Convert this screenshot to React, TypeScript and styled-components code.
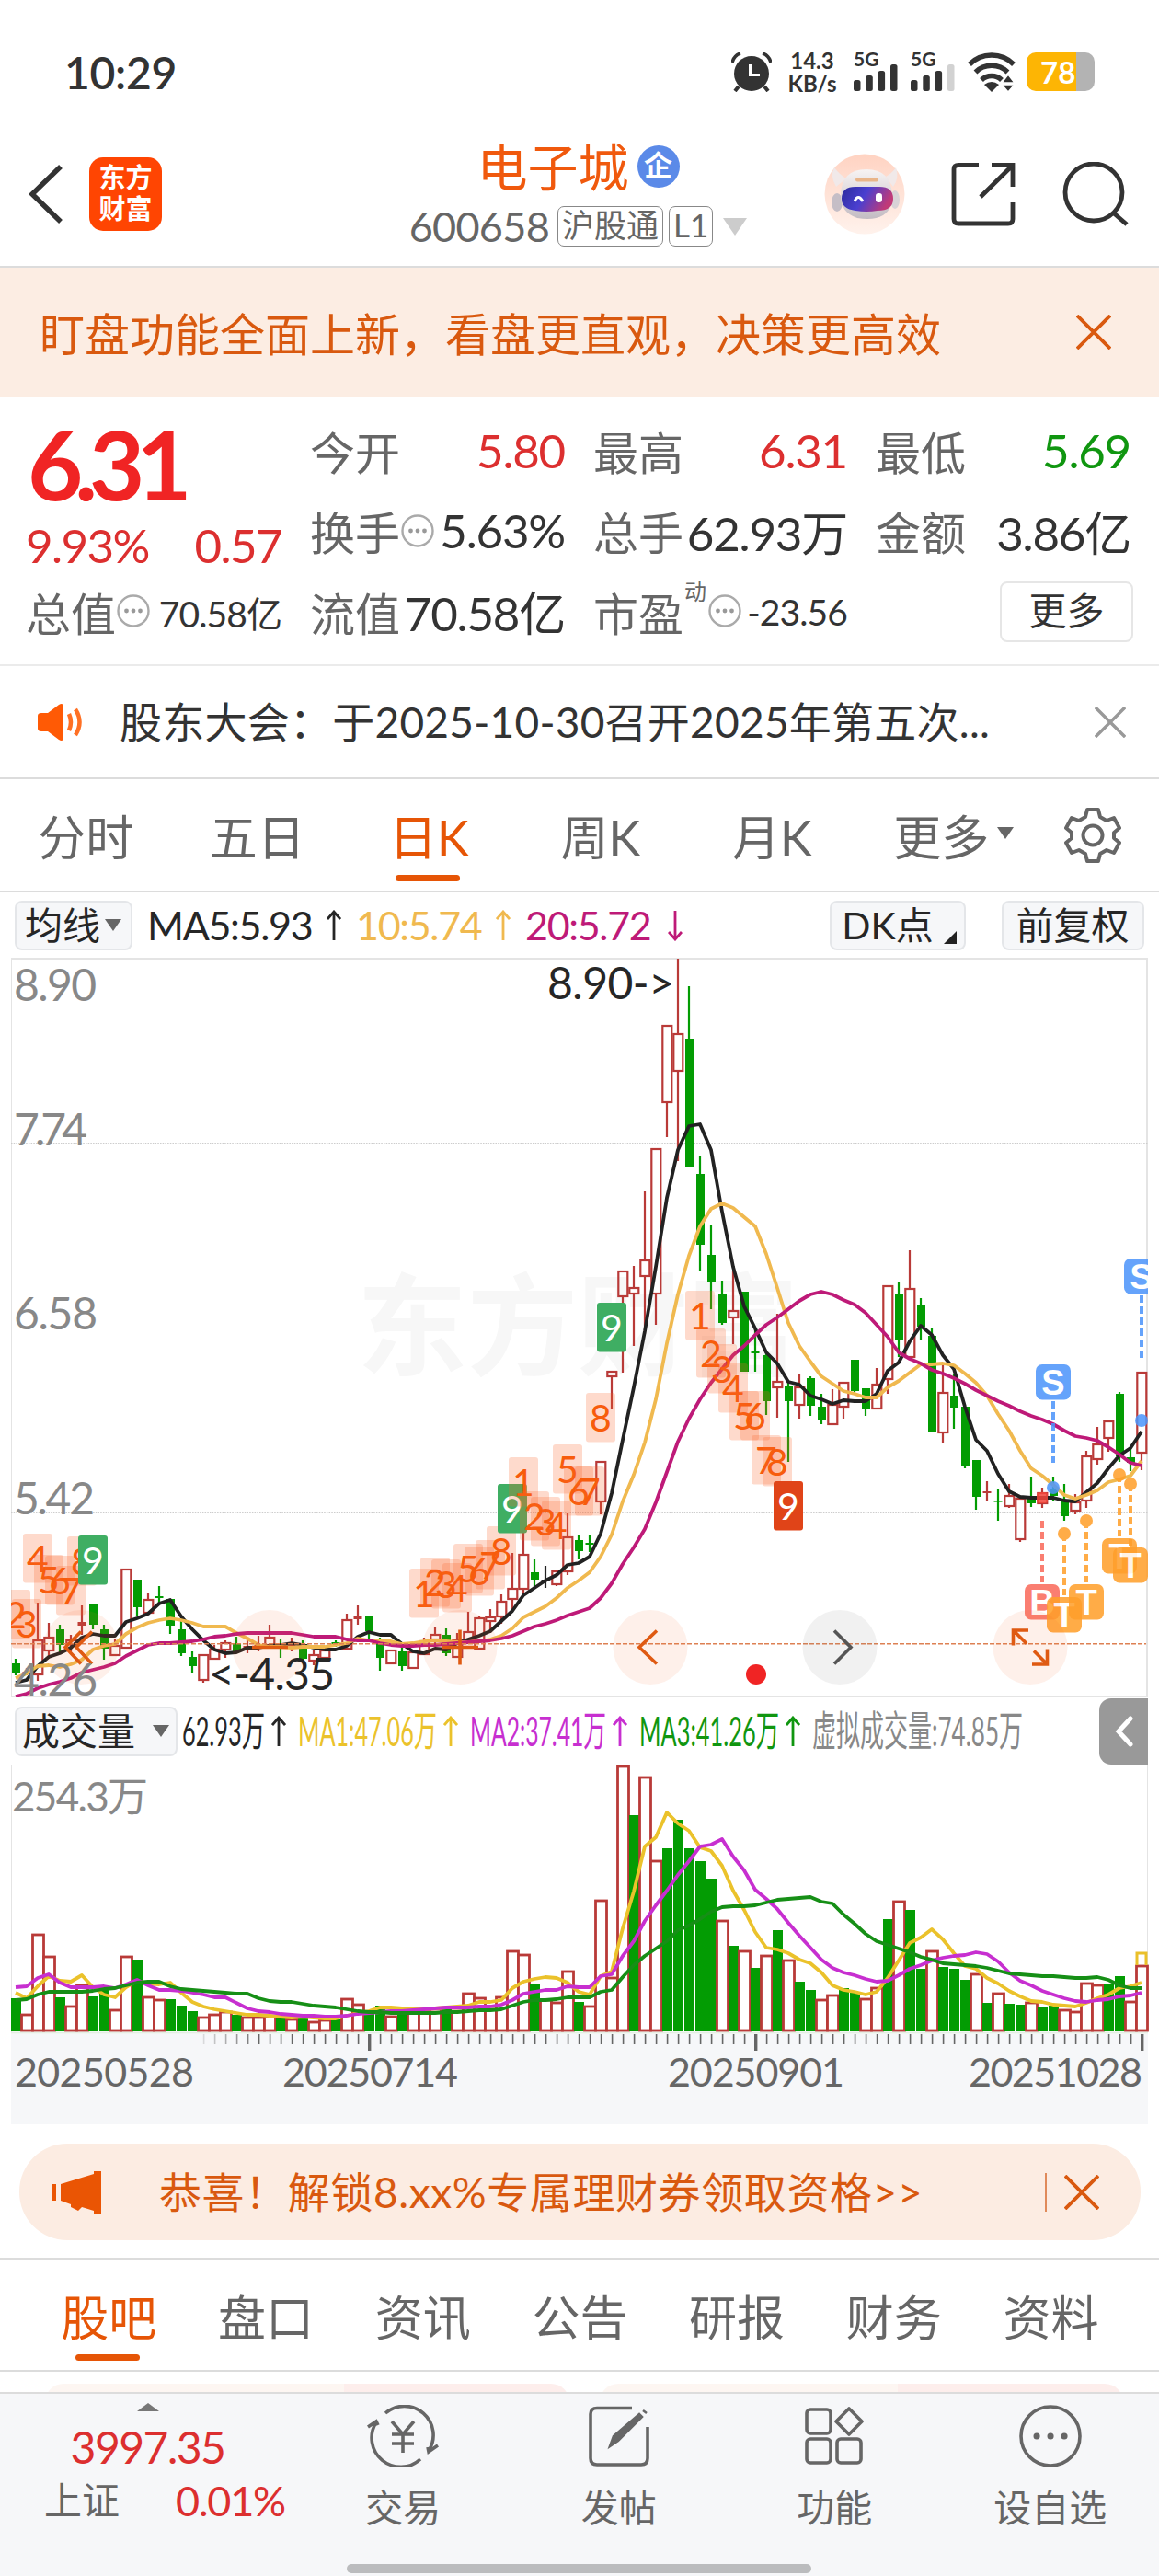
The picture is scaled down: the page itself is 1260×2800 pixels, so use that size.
import styled, { createGlobalStyle, css } from "styled-components";

import type { ReactNode } from "react";

type TKind = "r" | "g" | "k";
type TCandle = [TKind, number, number, number, number];
type TBadge = [number, number, string, string?];

const STEP = 12;
const FIRST_X = 17;
const xOf = (i: number) => FIRST_X + i * STEP;

const colors = {
    accent: "#e65506",
    orangeText: "#d9590f",
    up: "#b93a38",
    down: "#039c03",
    red: "#dc2f2f",
    text: "#333",
    label: "#666",
    line: "#dcdcdc",
};

// kind, high, body top, body bottom, low (px from the top of the chart)
const candles: TCandle[] = [
    ["g", 763, 768, 779, 781], ["r", 773, 777, 779, 781], ["r", 702, 742, 780, 787], ["r", 724, 739, 754, 763],
    ["g", 726, 731, 748, 757], ["r", 737, 742, 747, 755], ["r", 705, 723, 727, 737], ["g", 703, 703, 726, 731],
    ["g", 726, 731, 752, 764], ["r", 742, 748, 759, 759], ["r", 665, 665, 751, 752], ["g", 677, 677, 707, 717],
    ["r", 691, 698, 713, 713], ["g", 684, 695, 697, 703], ["g", 698, 698, 727, 736], ["g", 722, 731, 757, 760],
    ["g", 755, 761, 771, 778], ["r", 758, 758, 786, 789], ["r", 748, 752, 763, 764], ["r", 743, 745, 753, 762],
    ["g", 739, 747, 755, 755], ["r", 743, 749, 751, 757], ["r", 738, 748, 750, 755], ["r", 726, 739, 748, 750],
    ["g", 742, 748, 751, 762], ["r", 740, 747, 749, 755], ["g", 743, 747, 763, 764], ["r", 753, 758, 765, 770],
    ["r", 751, 753, 762, 764], ["g", 743, 745, 748, 750], ["r", 714, 720, 752, 752], ["r", 705, 717, 720, 726],
    ["g", 717, 717, 733, 742], ["g", 740, 743, 762, 776], ["r", 753, 753, 768, 768], ["g", 750, 755, 771, 776],
    ["r", 754, 755, 773, 773], ["r", 740, 743, 758, 759], ["r", 728, 736, 742, 747], ["g", 730, 737, 757, 760],
    ["r", 735, 742, 761, 762], ["r", 712, 733, 743, 745], ["r", 716, 718, 752, 754], ["r", 709, 717, 722, 735],
    ["r", 693, 700, 717, 725], ["r", 648, 686, 698, 710], ["r", 623, 649, 687, 693], ["g", 655, 669, 677, 687],
    ["k", 662, 677, 678, 686], ["r", 667, 667, 682, 684], ["r", 605, 630, 668, 672], ["g", 629, 634, 646, 655],
    ["g", 629, 637, 639, 647], ["r", 548, 548, 592, 606], ["r", 450, 450, 456, 492], ["r", 341, 341, 369, 452],
    ["r", 336, 359, 366, 423], ["r", 255, 329, 347, 410], ["r", 208, 208, 366, 400], ["r", 74, 74, 158, 196],
    ["r", 2, 83, 124, 222], ["g", 32, 89, 229, 229], ["g", 217, 236, 313, 341], ["g", 291, 324, 353, 383],
    ["g", 352, 367, 398, 400], ["r", 342, 384, 392, 421], ["g", 364, 364, 451, 451], ["g", 405, 429, 431, 451],
    ["g", 430, 433, 483, 498], ["r", 388, 461, 468, 501], ["g", 462, 466, 483, 549], ["r", 453, 467, 487, 502],
    ["g", 456, 458, 488, 499], ["g", 475, 489, 504, 508], ["r", 470, 486, 508, 508], ["r", 462, 462, 489, 502],
    ["g", 438, 438, 472, 473], ["g", 469, 469, 492, 499], ["r", 447, 464, 491, 492], ["r", 357, 357, 459, 475],
    ["g", 354, 366, 416, 435], ["r", 319, 360, 435, 435], ["g", 371, 379, 402, 416], ["g", 404, 412, 516, 517],
    ["r", 442, 473, 517, 528], ["g", 453, 477, 490, 513], ["g", 489, 489, 554, 556], ["g", 547, 547, 587, 601],
    ["r", 570, 581, 583, 592], ["g", 579, 591, 592, 613], ["r", 573, 585, 597, 599], ["r", 587, 588, 633, 636],
    ["g", 565, 588, 594, 598], ["r", 577, 582, 594, 599], ["g", 565, 578, 586, 591], ["g", 573, 590, 608, 613],
    ["r", 584, 592, 602, 606], ["r", 537, 542, 591, 599], ["r", 511, 529, 546, 552], ["r", 504, 504, 523, 538],
    ["g", 473, 475, 543, 549], ["g", 535, 544, 550, 559], ["r", 451, 451, 539, 558],
];

const ma5 = [
    789, 786, 771, 761, 757, 751, 740, 736, 738, 738, 723, 719, 714, 703, 699, 717, 731, 743, 753, 757, 756, 751, 751,
    749, 748, 746, 748, 751, 753, 753, 749, 739, 734, 737, 737, 747, 755, 757, 752, 753, 746, 742, 738, 733, 722, 711,
    694, 686, 678, 672, 661, 659, 652, 627, 583, 525, 468, 407, 337, 262, 210, 184, 182, 210, 277, 337, 380, 404, 430,
    442, 462, 465, 477, 481, 486, 482, 483, 483, 475, 450, 441, 418, 401, 411, 433, 448, 489, 525, 537, 562, 581, 587,
    588, 588, 588, 591, 592, 582, 572, 556, 542, 534, 516,
];

const ma10 = [
    784, 779, 771, 770, 772, 769, 764, 753, 749, 747, 736, 729, 724, 721, 719, 721, 724, 728, 728, 728, 735, 741, 748,
    750, 750, 751, 750, 750, 750, 748, 746, 741, 743, 744, 744, 747, 746, 744, 743, 744, 745, 745, 744, 742, 738, 730,
    718, 712, 706, 697, 686, 678, 669, 652, 628, 592, 563, 528, 481, 420, 367, 325, 293, 274, 268, 273, 283, 293, 323,
    360, 398, 423, 440, 456, 464, 472, 475, 479, 479, 468, 461, 452, 443, 443, 442, 444, 453, 463, 477, 497, 515, 537,
    556, 564, 574, 585, 589, 585, 580, 571, 568, 564, 548,
];

const ma20 = [
    804, 801, 795, 791, 788, 784, 778, 775, 772, 768, 760, 754, 748, 746, 746, 745, 744, 742, 739, 738, 736, 735, 735,
    735, 735, 735, 737, 739, 739, 739, 742, 743, 743, 746, 748, 749, 749, 748, 748, 747, 746, 745, 744, 743, 741, 738,
    733, 728, 725, 721, 716, 712, 708, 697, 681, 660, 642, 622, 593, 560, 527, 502, 481, 463, 448, 433, 423, 411, 400,
    392, 383, 374, 367, 364, 367, 373, 378, 387, 400, 413, 430, 437, 442, 449, 453, 458, 464, 471, 477, 483, 488, 494,
    499, 503, 508, 515, 521, 523, 526, 533, 541, 550, 553,
];

const volumes = [
    36, 19, 106, 82, 37, 28, 51, 38, 45, 24, 82, 78, 38, 35, 35, 28, 22, 16, 19, 22, 18, 16, 16, 17, 17, 14, 15, 11, 13,
    13, 36, 30, 20, 28, 17, 27, 26, 24, 25, 27, 23, 42, 37, 28, 38, 88, 84, 51, 35, 32, 66, 32, 28, 143, 59, 289, 235,
    277, 186, 199, 230, 199, 185, 166, 121, 93, 88, 69, 83, 110, 78, 54, 45, 35, 40, 47, 42, 36, 48, 122, 142, 132, 68,
    88, 70, 68, 56, 63, 31, 42, 30, 29, 32, 27, 28, 24, 22, 53, 51, 52, 60, 33, 72,
];

const volumeKinds =
    "grrrgrrggrrgrrgggrrrgrrrgrgrrgrrggrgrrrgrrrrrrrgrrrgrrrrgrrgggggrgrgrgrggrrggrrgrggrgggrgrggrggrrrrggr";

const vma5 = [
    42, 36, 49, 60, 55, 54, 61, 48, 40, 37, 48, 55, 52, 51, 53, 42, 32, 27, 24, 22, 20, 18, 18, 17, 16, 15, 16, 15, 14,
    14, 17, 20, 22, 26, 26, 25, 25, 24, 25, 26, 27, 28, 32, 32, 34, 47, 54, 57, 59, 58, 53, 43, 40, 60, 65, 112, 152,
    201, 211, 238, 226, 218, 200, 196, 180, 153, 132, 108, 91, 89, 85, 78, 74, 64, 50, 45, 43, 40, 43, 58, 77, 96, 102,
    111, 100, 85, 71, 68, 58, 52, 44, 38, 33, 32, 29, 28, 27, 31, 36, 40, 47, 49, 53,
];

const vma10 = [
    48, 49, 58, 62, 53, 48, 48, 48, 49, 47, 51, 56, 50, 45, 45, 44, 42, 40, 37, 37, 31, 25, 22, 21, 19, 18, 17, 17, 16,
    16, 17, 19, 20, 21, 22, 22, 23, 24, 25, 26, 26, 26, 27, 27, 29, 34, 41, 43, 45, 45, 49, 48, 48, 60, 62, 82, 98, 120,
    137, 153, 170, 185, 201, 203, 209, 190, 175, 154, 144, 133, 118, 104, 91, 78, 69, 64, 61, 57, 54, 55, 61, 68, 72, 77,
    80, 82, 83, 86, 84, 76, 64, 55, 50, 44, 40, 36, 33, 32, 34, 35, 38, 39, 42,
];

const vma20 = [
    34, 35, 40, 43, 43, 43, 43, 44, 46, 47, 50, 53, 54, 54, 49, 46, 45, 44, 43, 42, 41, 41, 36, 33, 32, 32, 30, 28, 27,
    26, 24, 22, 21, 21, 20, 20, 20, 20, 20, 21, 21, 22, 23, 23, 24, 28, 32, 34, 34, 35, 37, 37, 37, 43, 45, 59, 72, 82,
    90, 98, 110, 115, 122, 130, 135, 136, 136, 137, 140, 143, 144, 145, 146, 141, 139, 127, 117, 106, 98, 94, 90, 86, 81,
    78, 74, 73, 72, 71, 69, 66, 63, 62, 61, 60, 60, 59, 58, 58, 59, 56, 50, 47, 47,
];

// candle index, top, digit, fill when the count is complete
const badges: TBadge[] = [
    [0, 688, "2"], [1, 698, "3"], [2, 627, "4"], [3, 650, "5"], [4, 651, "6"], [5, 662, "7"], [6, 630, "8"],
    [7, 629, "9", "#3fae63"],
    [37, 665, "1"], [38, 653, "2"], [39, 655, "3"], [40, 659, "4"], [41, 638, "5"], [42, 641, "6"], [43, 634, "7"],
    [44, 619, "8"], [45, 573, "9", "#3fae63"],
    [46, 544, "1"], [47, 581, "2"], [48, 587, "3"], [49, 591, "4"], [50, 530, "5"], [51, 554, "6"], [52, 554, "7"],
    [53, 474, "8"], [54, 376, "9", "#3fae63"],
    [62, 363, "1"], [63, 404, "2"], [64, 421, "3"], [65, 442, "4"], [66, 472, "5"], [67, 472, "6"], [68, 520, "7"],
    [69, 522, "8"], [70, 570, "9", "#e04418"],
];

const trades = [
    { i: 94, label: "S", color: "#4c95fb", top: 443, from: 483, to: 550, dot: 577 },
    { i: 102, label: "S", color: "#4c95fb", top: 328, from: 368, to: 436, dot: 504 },
    { i: 93, label: "B", color: "#fa6a5a", top: 682, from: 613, to: 680, dot: 588 },
    { i: 95, label: "T", color: "#ff9f2a", top: 696, from: 627, to: 694, dot: 627 },
    { i: 97, label: "T", color: "#ff9f2a", top: 682, from: 613, to: 680, dot: 613 },
    { i: 100, label: "T", color: "#ff9f2a", top: 632, from: 563, to: 630, dot: 563 },
    { i: 101, label: "T", color: "#ff9f2a", top: 642, from: 573, to: 640, dot: 573 },
];

const points = (ys: number[]) => ys.map((y, i) => `${xOf(i)},${y}`).join(" ");
const kindColor = { r: colors.up, g: colors.down, k: "#222" };

const Candle = ({ index, data }: { index: number; data: TCandle }) => {
    const [kind, high, top, bottom, low] = data;
    const x = xOf(index);
    const color = kindColor[kind];
    const height = bottom - top;

    return (
        <g stroke={color} fill={kind === "r" ? "none" : color}>
            {high < top && <path d={`M${x} ${high}V${top}`} strokeWidth="2.2" />}
            {low > bottom && <path d={`M${x} ${bottom}V${low}`} strokeWidth="2.2" />}
            {height < 5 ? (
                <rect x={x - 4.5} y={top} width="9" height={Math.max(height, 1.6)} fill={color} stroke="none" />
            ) : kind === "r" ? (
                <rect x={x - 4.7} y={top + 1} width="10" height={height - 1} strokeWidth="2.2" />
            ) : (
                <rect x={x - 4} y={top} width="9" height={height} stroke="none" />
            )}
        </g>
    );
};

const RoundButton = ({ x, gray, d }: { x: number; gray?: boolean; d: string }) => (
    <g>
        <circle cx={x} cy="750.5" r="40.5" fill={gray ? "rgba(120,120,120,.1)" : "rgba(250,110,50,.1)"} />
        <path
            d={d}
            transform={`translate(${x} 750.5)`}
            fill="none"
            stroke={gray ? "#555" : "#df5a12"}
            strokeWidth="3.6"
        />
    </g>
);

const PriceChart = () => (
    <ChartSvg viewBox="0 0 1260 805" height="805">
        <defs>
            <clipPath id="plot">
                <rect x="12" y="0" width="1236" height="805" />
            </clipPath>
        </defs>
        <text x="388" y="446" fontSize="120" fontWeight="700" fill="#f7f7f7" textLength="480">
            东方财富
        </text>
        <g fill="none" stroke="#e4e4e4">
            <path d="M12.5 2V804" />
            <path d="M12 2H1248M12 804H1248M1247 2V804" strokeWidth="2" />
        </g>
        <path d="M12 202.5H1248M12 403.5H1248M12 604.5H1248" stroke="#ccc" strokeDasharray="1.5 1.2" />
        <g clipPath="url(#plot)">
            {candles.map((c, i) => (
                <Candle key={i} index={i} data={c} />
            ))}
            <g fill="none" strokeWidth="3.8" strokeLinejoin="round">
                <polyline points={points(ma5)} stroke="#222" />
                <polyline points={points(ma10)} stroke="#f0b94f" />
                <polyline points={points(ma20)} stroke="#be1a78" />
            </g>
            {badges.map(([i, top, digit, fill]) => (
                <g key={i}>
                    <rect
                        x={xOf(i) - 16}
                        y={top}
                        width="32"
                        height="53.5"
                        rx="3"
                        fill={fill ?? "rgba(250,100,40,.24)"}
                    />
                    <text
                        x={xOf(i)}
                        y={top + 42}
                        fontSize="41"
                        textAnchor="middle"
                        fill={fill ? "#fff" : "#f75c0c"}
                    >
                        {digit}
                    </text>
                </g>
            ))}
            <path d="M12 746.7H1246" stroke="#dd8053" strokeWidth="1.6" strokeDasharray="5 2" />
            {trades.map(({ i, label, color, top, from, to, dot }) => (
                <g key={i} opacity=".86">
                    <path d={`M${xOf(i)} ${from}V${to}`} stroke={color} strokeWidth="4" strokeDasharray="8 4" />
                    {label === "B" ? (
                        <rect x={xOf(i) - 6} y={dot - 6} width="12" height="12" rx="3" fill="#f4473c" />
                    ) : (
                        <circle cx={xOf(i)} cy={dot} r="7" fill={color} />
                    )}
                    <rect x={xOf(i) - 19} y={top} width="38" height="38.5" rx="7" fill={color} />
                    <TradeLetter x={xOf(i)} y={top + 33}>
                        {label}
                    </TradeLetter>
                </g>
            ))}
        </g>
        <RoundButton x={88} d="M0 -17L-17 0L0 18M12 -17L-5 0L12 18" />
        <RoundButton x={293} d="M-19 0H20" />
        <RoundButton x={500} d="M-19 0H20M0 -19V19" />
        <RoundButton x={707} d="M7 -18L-12 0L7 18" />
        <RoundButton x={913} gray d="M-6 -18L12 0L-6 18" />
        <RoundButton x={1120} d="M-18.500 -2V-18.500H-2M-18 -18L-4 -4M18.500 2V18.500H2M18 18L4 4" />
        <circle cx="822" cy="780" r="11" fill="#f02424" />
        <g fontSize="48" fill="#888">
            <text x="15" y="48" textLength="90">8.90</text>
            <text x="15" y="205" textLength="80">7.74</text>
            <text x="15" y="405" textLength="91">6.58</text>
            <text x="15" y="606" textLength="88">5.42</text>
            <text x="15" y="803" textLength="91">4.26</text>
        </g>
        <g fontSize="48" fill="#262626">
            <text x="595" y="46" textLength="138">8.90-&gt;</text>
            <text x="227" y="797" textLength="137">&lt;-4.35</text>
        </g>
    </ChartSvg>
);

const VOLUME_BASE = 290;

const VolumeChart = () => {
    const line = (values: number[]) => points(values.map((v) => VOLUME_BASE - v));

    return (
        <ChartSvg viewBox="0 0 1260 391" height="391">
            <defs>
                <linearGradient id="ticks" gradientUnits="userSpaceOnUse" x1="205" x2="285">
                    <stop offset="0" stopColor="#666" stopOpacity="0" />
                    <stop offset="1" stopColor="#666" />
                </linearGradient>
            </defs>
            <rect x="12" y="293" width="1236" height="98" fill="#f6f7f9" />
            <path d="M12.500 0V291M1247.500 0V291" stroke="#e4e4e4" />
            <path d="M12 0H1248" stroke="#e4e4e4" strokeWidth="2" />
            <path d="M12 291.500H1248" stroke="#e4eee4" strokeWidth="2" />
            {volumes.map((v, i) =>
                volumeKinds[i] === "g" ? (
                    <rect key={i} x={xOf(i) - 5} y={VOLUME_BASE - v} width="11" height={v} fill={colors.down} />
                ) : (
                    <rect
                        key={i}
                        x={xOf(i) - 5.5}
                        y={VOLUME_BASE - v + 1}
                        width="12"
                        height={v - 2}
                        fill="#fff"
                        stroke={colors.up}
                        strokeWidth="2.8"
                    />
                )
            )}
            <path d="M1236 218V205H1246V218" fill="none" stroke="#eac02a" strokeWidth="3" />
            <g fill="none" strokeWidth="3.8" strokeLinejoin="round">
                <polyline points={line(vma5)} stroke="#ebc22b" />
                <polyline points={line(vma10)} stroke="#c72fd0" />
                <polyline points={line(vma20)} stroke="#168f16" />
            </g>
            {volumes.map((_, i) => {
                const major = i === 32 || i === 67 || i === 102;
                if (i < 17) return null;
                return (
                    <rect
                        key={i}
                        x={xOf(i) - (major ? 1 : 0.2)}
                        y="293"
                        width={major ? 3.4 : 1.6}
                        height={major ? 18 : 11}
                        fill={i < 22 ? "url(#ticks)" : "#666"}
                    />
                );
            })}
            <text x="13" y="51" fontSize="44" fill="#888" textLength="148">
                254.3万
            </text>
            <g fontSize="43" fill="#666">
                <text x="16" y="350" textLength="195">20250528</text>
                <text x="307" y="350" textLength="191">20250714</text>
                <text x="726" y="350" textLength="192">20250901</text>
                <text x="1053" y="350" textLength="189">20251028</text>
            </g>
        </ChartSvg>
    );
};

const Cross = ({ size, color }: { size: number; color: string }) => (
    <svg width={size} height={size} viewBox="0 0 38 38" stroke={color} strokeWidth="3.8">
        <path d="M1 1L37 37M37 1L1 37" />
    </svg>
);

const Arrow = ({ down }: { down?: boolean }) => (
    <svg width="16" height="34" viewBox="0 0 16 34" fill="none" stroke="currentColor" strokeWidth="2.800">
        <path d={down ? "M8 1V32M1 24L8 32L15 24" : "M8 33V2M1 10L8 2L15 10"} />
    </svg>
);

const Info = () => (
    <svg width="36" height="36" viewBox="0 0 36 36">
        <circle cx="18" cy="18" r="16.500" fill="none" stroke="#aaa" strokeWidth="2.400" />
        <g fill="#999">
            <circle cx="10.500" cy="18" r="2.400" />
            <circle cx="18" cy="18" r="2.400" />
            <circle cx="25.500" cy="18" r="2.400" />
        </g>
    </svg>
);

const Signal = ({ weak }: { weak?: boolean }) => (
    <SignalBox>
        <span>5G</span>
        <svg width="48" height="29" viewBox="0 0 48 29" fill="#333">
            <rect x="0" y="17" width="7.500" height="12" rx="2.500" />
            <rect x="13.300" y="12" width="7.500" height="17" rx="2.500" />
            <rect x="26.600" y="7" width="7.500" height="22" rx="2.500" />
            <rect x="40" y="0" width="7.500" height="29" rx="2.500" fill={weak ? "#d2d2d2" : "#333"} />
        </svg>
    </SignalBox>
);

const StatusBar = () => (
    <StatusRow>
        <Clock>10:29</Clock>
        <StatusIcons>
            <svg width="44" height="43" viewBox="0 0 44 43">
                <circle cx="22" cy="23" r="19" fill="#333" />
                <path d="M1 11C2 6 6 2 10 1M43 11C42 6 38 2 34 1" stroke="#333" strokeWidth="3.500" fill="none" />
                <path d="M8 37L4 42M36 37L40 42" stroke="#333" strokeWidth="4" />
                <path d="M20.500 13V24.500H31" stroke="#fff" strokeWidth="3" fill="none" />
            </svg>
            <Speed>
                <span>14.3</span>
                <span>KB/s</span>
            </Speed>
            <Signal />
            <Signal weak />
            <svg width="52" height="43" viewBox="0 0 52 43">
                <g fill="none" stroke="#333" strokeWidth="5.500">
                    <path d="M2 13A34 34 0 0 1 50 13" />
                    <path d="M8.500 21.500A25 25 0 0 1 43.500 21.500" />
                    <path d="M15 30A15.500 15.500 0 0 1 37 30" />
                </g>
                <path d="M18 35Q26 29 34 35L26 43Z" fill="#333" />
                <path d="M37 33L44 24L51 33ZM37 35L44 43L51 35Z" fill="#333" stroke="#fff" strokeWidth="1.500" />
            </svg>
            <Battery>
                <b>78</b>
            </Battery>
        </StatusIcons>
    </StatusRow>
);

const Robot = () => (
    <svg width="88" height="88" viewBox="0 0 88 88">
        <defs>
            <linearGradient id="halo" x1="0" y1="0" x2="0" y2="1">
                <stop offset="0" stopColor="#ffd3c2" />
                <stop offset="1" stopColor="#fff2ec" />
            </linearGradient>
            <linearGradient id="visor" x1="0" y1="0" x2="1" y2="0.3">
                <stop offset="0" stopColor="#2c2b9c" />
                <stop offset=".5" stopColor="#4a3fd0" />
                <stop offset="1" stopColor="#c03a78" />
            </linearGradient>
            <linearGradient id="shell" x1="0" y1="0" x2="0" y2="1">
                <stop offset="0" stopColor="#f7f3f3" />
                <stop offset="1" stopColor="#c3bcc3" />
            </linearGradient>
        </defs>
        <circle cx="44" cy="44" r="43.500" fill="url(#halo)" />
        <path d="M13 36Q6 24 11 15Q17 23 24 27ZM67 25Q74 21 78 15Q82 27 75 36Z" fill="#f1e9e9" />
        <ellipse cx="14" cy="53" rx="6" ry="10" fill="#c5bec6" />
        <ellipse cx="77" cy="50" rx="5" ry="10" fill="#d8d2d6" />
        <path
            d="M18 46Q18 17 46 17Q72 17 74 44Q75 60 64 67Q54 73 36 70Q18 64 18 46Z"
            fill="url(#shell)"
        />
        <rect x="34" y="26" width="25" height="4.500" rx="2.200" fill="#e9b58a" />
        <path
            d="M19 49Q19 36 34 36H60Q75 36 75 49Q75 62 58 62Q46 64 34 62Q19 60 19 49Z"
            fill="url(#visor)"
        />
        <path d="M33 52Q37 43 42 52" fill="none" stroke="#fff" strokeWidth="3" />
        <rect x="56" y="43" width="7" height="10" rx="3.200" fill="#fff" />
    </svg>
);

const Header = () => (
    <HeaderRow>
        <svg width="38" height="64" viewBox="0 0 38 64" fill="none" stroke="#333" strokeWidth="5.500">
            <path d="M35 2L4 32L35 62" />
        </svg>
        <Logo>
            <span>东方</span>
            <span>财富</span>
        </Logo>
        <TitleBlock>
            <TitleLine>
                电子城<TitleBadge>企</TitleBadge>
            </TitleLine>
            <CodeLine>
                <Code>600658</Code>
                <Tag>沪股通</Tag>
                <Tag>L1</Tag>
                <Caret $size={13} $color="#ccc" />
            </CodeLine>
        </TitleBlock>
        <HeaderIcons>
            <Robot />
            <svg width="70" height="70" viewBox="0 0 70 70" fill="none" stroke="#333" strokeWidth="4.800">
                <path d="M30 3.500H8Q3 3.500 3 8V62Q3 67 8 67H62Q67 67 67 62V44" />
                <path d="M44 3.500H67V27M67 3.500L32 38" />
            </svg>
            <svg width="72" height="70" viewBox="0 0 72 70" fill="none" stroke="#333" strokeWidth="4.800">
                <circle cx="34" cy="33" r="31" />
                <path d="M55 55L70 68" />
            </svg>
        </HeaderIcons>
    </HeaderRow>
);

type StatProps = {
    label: string;
    value: string;
    color?: string;
    info?: boolean;
    sup?: string;
    small?: boolean;
};

const Stat = ({ label, value, color, info, sup, small }: StatProps) => (
    <StatCell>
        <StatLabel>{label}</StatLabel>
        {sup && <Sup>{sup}</Sup>}
        {info && <Info />}
        <StatValue $color={color} $small={small}>
            {value}
        </StatValue>
    </StatCell>
);

const Quote = () => (
    <QuoteGrid>
        <PriceCell>
            <Price>6.31</Price>
            <Change>
                <span>9.93%</span>
                <span>0.57</span>
            </Change>
        </PriceCell>
        <Stat label="今开" value="5.80" color={colors.red} />
        <Stat label="最高" value="6.31" color={colors.red} />
        <Stat label="最低" value="5.69" color="#109610" />
        <Stat label="换手" value="5.63%" info />
        <Stat label="总手" value="62.93万" />
        <Stat label="金额" value="3.86亿" />
        <Stat label="总值" value="70.58亿" info small />
        <Stat label="流值" value="70.58亿" />
        <Stat label="市盈" value="-23.56" sup="动" info small />
        <MoreButton>更多</MoreButton>
    </QuoteGrid>
);

const Condensed = ({ width, color, children }: { width: number; color: string; children: ReactNode }) => (
    <CondensedSvg width={width} height="56" fill={color}>
        <text x="0" y="44" fontSize="45" textLength={width} lengthAdjust="spacingAndGlyphs">
            {children}
        </text>
    </CondensedSvg>
);

const periods = ["分时", "五日", "日K", "周K", "月K"];
const sections = ["股吧", "盘口", "资讯", "公告", "研报", "财务", "资料"];

const actions: { label: string; icon: ReactNode }[] = [
    {
        label: "交易",
        icon: (
            <svg width="78" height="68" viewBox="0 0 78 68">
                <path d="M20 9A31.500 31.500 0 0 1 67 50" />
                <path d="M58 59A31.500 31.500 0 0 1 10 19" />
                <path d="M1 24L10 18L12 22M77 44L67 51L66 46" />
                <path d="M27 18L39 32L51 18M39 32V52M27 32H51M27 42H51" />
            </svg>
        ),
    },
    {
        label: "发帖",
        icon: (
            <svg width="68" height="68" viewBox="0 0 68 68">
                <path d="M48 3.500H10Q3 3.500 3 10V58Q3 65 10 65H58Q65 65 65 58V24" />
                <path d="M24 45L28 34L56 10L59 13L33 39ZM60 6L64 9" fill="#666" strokeWidth="2.500" />
            </svg>
        ),
    },
    {
        label: "功能",
        icon: (
            <svg width="64" height="64" viewBox="0 0 64 64">
                <rect x="2" y="3" width="26" height="26" rx="4" />
                <rect x="2" y="35" width="26" height="26" rx="4" />
                <rect x="35" y="35" width="26" height="26" rx="4" />
                <path d="M48 2L62 16L48 30L34 16Z" strokeLinejoin="round" />
            </svg>
        ),
    },
    {
        label: "设自选",
        icon: (
            <svg width="68" height="68" viewBox="0 0 68 68">
                <circle cx="34" cy="34" r="32" />
                <path d="M19 34H19.100M34 34H34.100M49 34H49.100" strokeWidth="7" strokeLinecap="round" />
            </svg>
        ),
    },
];

const App = () => (
    <Page>
        <GlobalStyle />
        <StatusBar />
        <Header />
        <Banner>
            <span>盯盘功能全面上新，看盘更直观，决策更高效</span>
            <Cross size={38} color={colors.orangeText} />
        </Banner>
        <Quote />
        <Notice>
            <svg width="52" height="42" viewBox="0 0 52 42">
                <path d="M1 14Q1 11 5 11H12L24 2Q29 -1 29 5V37Q29 43 24 40L12 31H5Q1 31 1 28Z" fill="#ff5a05" />
                <path d="M35 12Q39 21 35 30M42 7Q51 21 42 35" fill="none" stroke="#ff7024" strokeWidth="4.500" />
            </svg>
            <span>股东大会：于2025-10-30召开2025年第五次...</span>
            <Cross size={34} color="#999" />
        </Notice>
        <Periods>
            {periods.map((p) => (
                <Tab key={p} $active={p === "日K"}>
                    {p}
                </Tab>
            ))}
            <MoreTab>
                更多
                <Caret $size={9} $color="#666" />
            </MoreTab>
            <svg width="62" height="62" viewBox="0 0 62 62" fill="none" stroke="#666" strokeWidth="4">
                <path
                    d="M25 3H37L39 11L46 15L54 12L60 23L54 28V34L60 39L54 50L46 47L39 51L37 59H25L23 51L16 47L8 50L2 39L8 34V28L2 23L8 12L16 15L23 11Z"
                    strokeLinejoin="round"
                />
                <circle cx="31" cy="31" r="10.500" />
            </svg>
        </Periods>
        <Indicators>
            <Chip $width={128}>
                均线
                <Caret $size={9} $color="#666" />
            </Chip>
            <MaValue $color="#262626" $width={227}>
                <span>MA5:5.93</span>
                <Arrow />
            </MaValue>
            <MaValue $color="#f0b94f" $width={184}>
                <span>10:5.74</span>
                <Arrow />
            </MaValue>
            <MaValue $color="#be1a78" $width={187}>
                <span>20:5.72</span>
                <Arrow down />
            </MaValue>
            <Chip $width={148} $push>
                DK点
                <Corner />
            </Chip>
            <Chip $width={155}>前复权</Chip>
        </Indicators>
        <PriceChart />
        <VolumeHeader>
            <Chip $width={177} $spread>
                成交量
                <Caret $size={9} $color="#666" />
            </Chip>
            <VolumeValues>
                <VolumeItem>
                    <Condensed width={90} color="#262626">62.93万</Condensed>
                    <Arrow />
                </VolumeItem>
                <VolumeItem $color="#ebc22b">
                    <Condensed width={151} color="#ebc22b">MA1:47.06万</Condensed>
                    <Arrow />
                </VolumeItem>
                <VolumeItem $color="#c72fd0">
                    <Condensed width={148} color="#c72fd0">MA2:37.41万</Condensed>
                    <Arrow />
                </VolumeItem>
                <VolumeItem $color="#109610">
                    <Condensed width={152} color="#109610">MA3:41.26万</Condensed>
                    <Arrow />
                </VolumeItem>
                <Condensed width={229} color="#888">虚拟成交量:74.85万</Condensed>
            </VolumeValues>
            <SideTab>
                <svg width="20" height="34" viewBox="0 0 20 34" fill="none" stroke="#fff" strokeWidth="5">
                    <path d="M17 3L4 17L17 31" strokeLinecap="round" />
                </svg>
            </SideTab>
        </VolumeHeader>
        <VolumeChart />
        <Promo>
            <svg width="54" height="46" viewBox="0 0 54 46" fill="#ea5504">
                <path d="M0 14H5V32H0ZM10 14L46 3V0H54V46H46V43L33 39L29 43L21 39V36L10 32Z" />
            </svg>
            <span>恭喜！解锁8.xx%专属理财券领取资格&gt;&gt;</span>
            <Divider />
            <Cross size={38} color={colors.orangeText} />
        </Promo>
        <Sections>
            {sections.map((s) => (
                <Tab key={s} $active={s === "股吧"} $section>
                    {s}
                </Tab>
            ))}
        </Sections>
        <Peek>
            <PeekCard />
            <PeekCard />
        </Peek>
        <BottomBar>
            <IndexCell>
                <UpMark />
                <IndexValue>3997.35</IndexValue>
                <IndexLine>
                    <span>上证</span>
                    <b>0.01%</b>
                </IndexLine>
            </IndexCell>
            {actions.map(({ label, icon }) => (
                <Action key={label}>
                    <ActionIcon>{icon}</ActionIcon>
                    {label}
                </Action>
            ))}
            <HomeBar />
        </BottomBar>
    </Page>
);

const GlobalStyle = createGlobalStyle`
    body {
        margin: 0;
        background: #fff;
    }

    *, *::before, *::after {
        box-sizing: border-box;
    }
`;

const Page = styled.div`
    width: 1260px;
    height: 2800px;
    overflow: hidden;
    display: flex;
    flex-direction: column;
    background: #fff;
    color: ${colors.text};
    font-family: Lato, "Noto Sans CJK SC", sans-serif;
    white-space: nowrap;

    & svg {
        display: block;
        flex: none;
    }
`;

const StatusRow = styled.div`
    height: 150px;
    flex: none;
    padding: 57px 70px 0 70px;
    display: flex;
    justify-content: space-between;
`;

const Clock = styled.div`
    height: 43px;
    font-size: 48px;
    line-height: 43px;
    font-weight: 600;
    letter-spacing: -0.3px;
`;

const StatusIcons = styled.div`
    display: flex;
    height: 43px;
`;

const Speed = styled.div`
    width: 54px;
    margin: -4px 18px 0 17px;
    display: flex;
    flex-direction: column;
    font-size: 24px;
    line-height: 25px;
    font-weight: 700;
    text-align: center;
`;

const SignalBox = styled.div`
    width: 62px;
    display: flex;
    flex-direction: column;

    & span {
        height: 13px;
        font-size: 21px;
        line-height: 14px;
        font-weight: 700;
    }
`;

const Battery = styled.div`
    width: 74px;
    height: 42px;
    margin-left: 12px;
    border-radius: 10px;
    background: linear-gradient(90deg, #fdb504 54px, #b3b3b3 54px);
    color: #fff;
    font-size: 33px;
    line-height: 42px;
    padding-left: 15px;
`;

const HeaderRow = styled.div`
    height: 141px;
    flex: none;
    display: flex;
    align-items: center;
    padding: 0 33px 17px 31px;
    border-bottom: 2px solid ${colors.line};
`;

const Logo = styled.div`
    width: 79px;
    height: 80px;
    margin-left: 28px;
    border-radius: 15px;
    background: #ff4502;
    color: #fff;
    display: flex;
    flex-direction: column;
    align-items: center;
    justify-content: center;
    font-size: 29px;
    line-height: 34px;
    font-weight: 700;
    padding-bottom: 2px;
`;

const TitleBlock = styled.div`
    flex: 1;
    height: 124px;
    padding-left: 185px;
    display: flex;
    flex-direction: column;
    align-items: center;
`;

const TitleLine = styled.div`
    height: 72px;
    display: flex;
    align-items: center;
    color: #f0590d;
    font-size: 55px;
    line-height: 66px;
    margin-top: -2px;
`;

const TitleBadge = styled.span`
    width: 46px;
    height: 46px;
    margin: 0 0 0 9px;
    border-radius: 50%;
    background: #5b8ae8;
    color: #fff;
    font-size: 31px;
    line-height: 43px;
    font-weight: 700;
    text-align: center;
`;

const CodeLine = styled.div`
    height: 54px;
    display: flex;
    align-items: center;
    margin-top: 5px;
`;

const Code = styled.span`
    color: ${colors.label};
    font-size: 45px;
    letter-spacing: -0.7px;
    margin-right: 9px;
`;

const Tag = styled.span`
    height: 44px;
    padding: 0 4px;
    margin-right: 6px;
    border: 1.5px solid #888;
    border-radius: 7px;
    color: #666;
    font-size: 35px;
    line-height: 39px;
`;

const Caret = styled.i<{ $size: number; $color: string }>`
    ${({ $size, $color }) => css`
        border: ${$size}px solid transparent;
        border-top: ${$size * 1.5}px solid ${$color};
    `}
    border-bottom: 0;
    margin-left: 5px;
`;

const HeaderIcons = styled.div`
    display: flex;
    align-items: center;
    gap: 50px;

    & > :nth-child(2) {
        margin-right: 1px;
    }
`;

const Banner = styled.div`
    height: 140px;
    flex: none;
    display: flex;
    align-items: center;
    justify-content: space-between;
    padding: 0 52px 0 43px;
    background: #fcede3;
    color: ${colors.orangeText};
    font-size: 49px;

    & span {
        margin-top: -2px;
    }
`;

const QuoteGrid = styled.div`
    height: 293px;
    flex: none;
    display: grid;
    grid-template-columns: 278px 277px 276px 277px;
    grid-template-rows: 88px 87px 88px;
    column-gap: 31px;
    padding: 14px 28px 0;
    border-bottom: 2px solid #ebebeb;
`;

const PriceCell = styled.div`
    grid-row: 1 / span 2;
    display: flex;
    flex-direction: column;
`;

const Price = styled.div`
    height: 110px;
    padding-left: 2px;
    color: #f02424;
    font-size: 104px;
    line-height: 117px;
    font-weight: 700;
    letter-spacing: -9px;
`;

const Change = styled.div`
    display: flex;
    justify-content: space-between;
    color: ${colors.red};
    font-size: 51px;
    line-height: 75px;
    letter-spacing: -1.6px;
`;

const StatCell = styled.div`
    display: flex;
    align-items: center;
`;

const StatLabel = styled.span`
    color: ${colors.label};
    font-size: 49px;
    margin-right: 1px;
`;

const Sup = styled.span`
    height: 66px;
    color: ${colors.label};
    font-size: 24px;
    line-height: 24px;
    margin-right: 2px;
`;

const StatValue = styled.span<{ $color?: string; $small?: boolean }>`
    margin: 0 0 0 auto;
    padding-top: ${({ $small }) => ($small ? 2 : 0)}px;
    color: ${({ $color }) => $color ?? colors.text};
    font-size: ${({ $small }) => ($small ? 39 : 51)}px;
    letter-spacing: ${({ $small }) => ($small ? -0.9 : -1.2)}px;
`;

const MoreButton = styled.div`
    width: 145px;
    height: 66px;
    margin: 12px -3px 0 auto;
    border: 2px solid #e6e6e6;
    border-radius: 8px;
    font-size: 41px;
    line-height: 60px;
    text-align: center;
`;

const Notice = styled.div`
    height: 123px;
    flex: none;
    display: flex;
    align-items: center;
    padding: 0 36px 0 40px;
    border-bottom: 2px solid ${colors.line};
    font-size: 46px;

    & span {
        flex: 1;
        margin: -6px 0 0 38px;
        letter-spacing: 0.25px;
    }
`;

const Periods = styled.div`
    height: 123px;
    flex: none;
    display: flex;
    align-items: center;
    border-bottom: 2px solid ${colors.line};

    & > svg {
        margin-left: 38px;
    }
`;

const Tab = styled.div<{ $active?: boolean; $section?: boolean }>`
    width: ${({ $section }) => ($section ? 170.700 : 186.500)}px;
    height: 100%;
    display: flex;
    align-items: center;
    justify-content: center;
    position: relative;
    color: ${({ $active }) => ($active ? colors.accent : colors.label)};
    font-size: 52px;

    ${({ $active }) =>
        $active &&
        css`
            &::after {
                content: "";
                position: absolute;
                bottom: 10px;
                left: calc(50% - 36px);
                width: 70px;
                height: 7px;
                border-radius: 4px;
                background: ${colors.accent};
            }
        `}
`;

const MoreTab = styled(Tab)`
    padding-left: 22px;

    & i {
        margin: -4px 0 0 9px;
    }
`;

const Indicators = styled.div`
    height: 70px;
    flex: none;
    display: flex;
    align-items: center;
    padding: 1px 16px 0;
`;

const Chip = styled.div<{ $width: number; $push?: boolean; $spread?: boolean }>`
    width: ${({ $width }) => $width}px;
    height: 54px;
    flex: none;
    display: flex;
    align-items: center;
    justify-content: ${({ $spread }) => ($spread ? "space-between" : "center")};
    padding: 0 7px 0 6px;
    margin-left: ${({ $push }) => ($push ? "auto" : 0)};
    margin-right: ${({ $push }) => ($push ? 39 : 0)}px;
    border: 2px solid #e4e6e9;
    border-radius: 8px;
    background: #f6f7f9;
    color: #262626;
    font-size: 41px;
    line-height: 48px;
`;

const Corner = styled.i`
    align-self: flex-end;
    border: 7px solid transparent;
    border-right-color: #222;
    border-bottom-color: #222;
    margin: 0 -4px 5px 11px;
`;

const MaValue = styled.div<{ $color: string; $width: number }>`
    width: ${({ $width }) => $width}px;
    padding-left: 16px;
    display: flex;
    align-items: center;
    justify-content: space-between;
    color: ${({ $color }) => $color};
    font-size: 43px;
    letter-spacing: -1.3px;
`;

const ChartSvg = styled.svg`
    width: 1260px;
    font-family: Lato, "Noto Sans CJK SC", sans-serif;
`;

const CondensedSvg = styled.svg`
    overflow: visible;
`;

const TradeLetter = styled.text`
    fill: #fff;
    font-family: "Liberation Sans", sans-serif;
    font-size: 38px;
    font-weight: 700;
    text-anchor: middle;
`;

const VolumeHeader = styled.div`
    height: 73px;
    flex: none;
    display: flex;
    align-items: center;
    padding: 0 12px 0 16px;
`;

const VolumeValues = styled.div`
    display: flex;
    align-items: center;
    gap: 13px;
    padding-left: 5px;
`;

const VolumeItem = styled.div<{ $color?: string }>`
    display: flex;
    align-items: center;
    gap: 7px;
    color: ${({ $color }) => $color ?? "#262626"};
`;

const SideTab = styled.div`
    width: 53px;
    height: 72px;
    margin-left: auto;
    display: flex;
    align-items: center;
    justify-content: center;
    border-radius: 13px 0 0 13px;
    background: #999;
`;

const Promo = styled.div`
    height: 105px;
    flex: none;
    margin: 21px 20px 19px 21px;
    padding: 0 45px 0 35px;
    display: flex;
    align-items: center;
    border-radius: 52px;
    background: #fcece2;
    color: ${colors.orangeText};
    font-size: 46px;

    & span {
        margin: -5px 0 0 63px;
        letter-spacing: 0.6px;
    }
`;

const Divider = styled.i`
    width: 2px;
    height: 42px;
    margin: 0 19px 0 auto;
    background: #e08a5a;
`;

const Sections = styled.div`
    height: 124px;
    flex: none;
    display: flex;
    padding-left: 33px;
    border-top: 2px solid ${colors.line};
    border-bottom: 2px solid ${colors.line};
`;

const Peek = styled.div`
    height: 22px;
    flex: none;
    display: flex;
    gap: 33px;
    padding: 13px 39px 0 49px;
    overflow: hidden;
`;

const PeekCard = styled.div`
    flex: 1;
    height: 40px;
    border-radius: 20px;
    background: linear-gradient(90deg, #fdf6f2 57%, #fdeeec 57%);
`;

const BottomBar = styled.div`
    flex: 1;
    display: flex;
    position: relative;
    border-top: 2px solid ${colors.line};
    background: #f6f7f9;
`;

const IndexCell = styled.div`
    width: 321px;
    display: flex;
    flex-direction: column;
    align-items: center;
    color: ${colors.red};
`;

const UpMark = styled.i`
    margin: 10px 0 0 0;
    border: 12px solid transparent;
    border-top: 0;
    border-bottom: 9px solid #777;
`;

const IndexValue = styled.div`
    height: 58px;
    margin-top: 10px;
    font-size: 48px;
    line-height: 58px;
    letter-spacing: -1.5px;
`;

const IndexLine = styled.div`
    width: 262px;
    margin-left: 37px;
    display: flex;
    justify-content: space-between;
    align-items: center;
    font-size: 41px;
    line-height: 58px;

    & span {
        color: ${colors.label};
    }

    & b {
        font-size: 45px;
        font-weight: 400;
        letter-spacing: -1.2px;
    }
`;

const Action = styled.div`
    width: 234.500px;
    display: flex;
    flex-direction: column;
    align-items: center;
    color: ${colors.label};
    font-size: 41px;
    line-height: 56px;
`;

const ActionIcon = styled.div`
    height: 84px;
    display: flex;
    align-items: center;
    margin: 4px 0 8px;

    & svg {
        fill: none;
        stroke: #666;
        stroke-width: 3.6;
    }
`;

const HomeBar = styled.i`
    position: absolute;
    left: 377px;
    bottom: 3px;
    width: 505px;
    height: 10px;
    border-radius: 5px;
    background: #bbbcbe;
`;

export default App;
